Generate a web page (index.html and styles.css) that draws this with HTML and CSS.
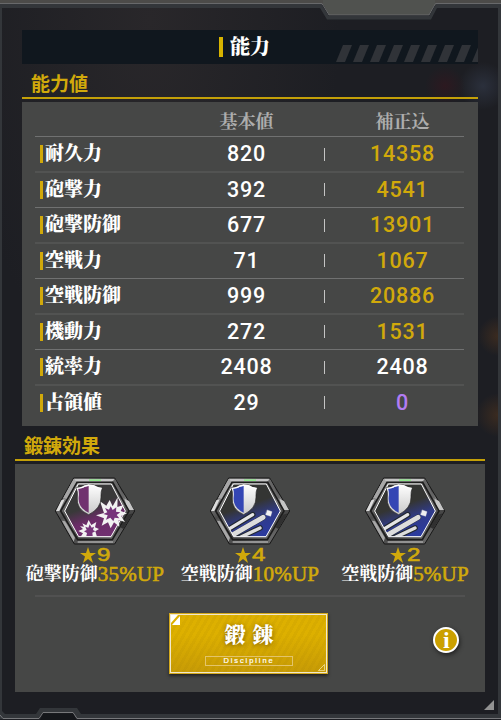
FILE: index.html
```
<!DOCTYPE html>
<html lang="ja">
<head>
<meta charset="utf-8">
<title>能力</title>
<link rel="stylesheet" href="styles.css">
</head>
<body>
<svg class="defs" aria-hidden="true">
  <defs>
    <linearGradient id="metal" x1="0" y1="0" x2="0.55" y2="1">
      <stop offset="0" stop-color="#999"/><stop offset=".15" stop-color="#a5a5a5"/><stop offset=".35" stop-color="#707070"/>
      <stop offset=".5" stop-color="#4c4c4c"/><stop offset=".62" stop-color="#7c7c7c"/><stop offset=".8" stop-color="#454545"/><stop offset="1" stop-color="#666"/>
    </linearGradient>
    <linearGradient id="purple" x1=".3" y1="0" x2=".7" y2="1">
      <stop offset=".4" stop-color="#393939"/><stop offset=".65" stop-color="#6b2c68"/><stop offset="1" stop-color="#713071"/>
    </linearGradient>
    <linearGradient id="blue" x1=".3" y1="0" x2=".7" y2="1">
      <stop offset=".4" stop-color="#343533"/><stop offset=".66" stop-color="#303b89"/><stop offset="1" stop-color="#2b3aa0"/>
    </linearGradient>
    <linearGradient id="silver" x1="0" y1="0" x2="0" y2="1">
      <stop offset="0" stop-color="#fff"/><stop offset="1" stop-color="#c9c9c9"/>
    </linearGradient>
    <clipPath id="inner"><path d="M190 57H289L331 138L288 215H191L149 138Z"/></clipPath>
    <symbol id="hex" viewBox="120 36 240 204">
      <path d="M176 39H299L359 138L299 237H178L121 138Z" fill="url(#metal)" stroke="#161616" stroke-width="3"/>
      <path d="M180 42H296L300 50H178Z" fill="#c4c4c4"/>
      <path d="M222 43H258V48H222Z" fill="#8fe48a"/>
      <path d="M176 42L186 51L157 103L145 98Z" fill="#a7a7a7"/>
      <path d="M123 138L139 106L149 103L133 138Z" fill="#ddd"/>
      <path d="M300 42L288 53L315 103L329 98Z" fill="#666"/>
      <path d="M329 102L342 108L357 135H337Z" fill="#c6c6c6"/>
      <path d="M186 52L137 138L188 224H292L342 138L293 52Z" fill="none" stroke="#1c1c1c" stroke-width="5"/>
      <path d="M141 167L150 169L180 218L176 230Z" fill="#a8a8a8"/>
      <path d="M338 149L354 145L325 192L316 187Z" fill="#303030"/>
      <path d="M188 231H294" stroke="#a5a5a5" stroke-width="5"/>
    </symbol>
    <symbol id="shield" viewBox="120 36 240 204">
      <path d="M183 68Q200 68 208 61L221 58L237 61Q247 68 262 69Q257 80 258 96Q259 130 221 149Q183 133 187 96Q189 80 183 68Z" fill="url(#silver)" stroke="#222" stroke-width="2"/>
      <path d="M189 70Q202 70 210 65L221 63V143Q188 127 191 96Q193 82 189 70Z" fill="currentColor"/>
      <path d="M185 70Q202 69 209 63L221 60L238 63Q247 69 260 70" fill="none" stroke="#fff" stroke-width="4"/>
    </symbol>
    <symbol id="badge-gun" viewBox="120 36 240 204">
      <use href="#hex" x="120" y="36" width="240" height="204"/>
      <path d="M190 57H289L331 138L288 215H191L149 138Z" fill="url(#purple)"/>
      <path d="M190 57H289L331 138L288 215H191L149 138Z" fill="none" stroke="#fff" stroke-width="3"/>
      <g>
        <path d="M255 109L274 122L284 105L293 124L308 97L307 126L326 120L317 138L336 145L318 153L330 171L311 165L313 185L297 172L287 190L279 172L260 182L267 160L243 151L267 144Z" fill="#f2f2f2"/>
        <path d="M270 129L282 134L287 124L293 135L304 127L303 140L316 142L305 150L313 160L299 158L295 169L286 158L273 164L278 151L265 147L277 142Z" fill="#76347a"/>
        <path d="M202 175L214 181L221 165L229 180L244 171L240 187L252 192L241 199L246 215H197L204 205L190 198L204 192L195 184L207 185Z" fill="#f2f2f2"/>
        <path d="M211 185L220 188L224 178L230 188L237 185L234 195L241 199L232 203L233 213H214L216 204L207 199L215 195Z" fill="#76347a"/>
      </g>
      <use href="#shield" x="120" y="36" width="240" height="204" color="#71326f"/>
    </symbol>
    <symbol id="badge-air" viewBox="120 36 240 204">
      <use href="#hex" x="120" y="36" width="240" height="204"/>
      <path d="M190 57H289L331 138L288 215H191L149 138Z" fill="url(#blue)"/>
      <g clip-path="url(#inner)" stroke-linecap="round">
        <path d="M170 196L248 149M180 215L279 157M205 220L270 189" stroke="#222831" stroke-width="17"/>
        <path d="M170 196L248 149" stroke="#e4e4e4" stroke-width="10"/>
        <path d="M184 212L279 157" stroke="#ddd" stroke-width="15"/>
        <path d="M205 220L270 189" stroke="#ddd" stroke-width="10"/>
        <path d="M292 135L306 140L302 154L287 149Z" fill="#f0f0f0" stroke="#f0f0f0" stroke-width="1"/>
      </g>
      <path d="M190 57H289L331 138L288 215H191L149 138Z" fill="none" stroke="#fff" stroke-width="3"/>
      <use href="#shield" x="120" y="36" width="240" height="204" color="#3446b4"/>
    </symbol>
  </defs>
</svg>

<svg class="frame" viewBox="0 0 501 720" aria-hidden="true">
  <path d="M0 0H501V5H0Z" fill="#4c4b49"/>
  <path d="M323 0H435V4L429 15H329L323 4Z" fill="#50524f"/>
  <path d="M0 3.5H322L329 15H429L435.500 3.500H501" fill="none" stroke="#68696b"/>
  <path d="M0 4H321.500L328.500 15.500H429.500L436 4H501V8H437L431 19.500H327L320 8H2V711L5 714H36L40 708H77L81 714H501V719H77L73 713H42L38 719H0Z" fill="#33363a"/>
  <path d="M498 8H501V716H498Z" fill="#33363a"/>
  <path d="M0 8H2V716H0Z" fill="#33363a"/>
  <path d="M0 715L3 718.500H39L43 712.500H73L77 718.500H501" fill="none" stroke="#77787b"/>
  <path d="M40 720L43.500 713.500H73L76.500 720Z" fill="#14161a"/>
  <path d="M484 710L494 700V710Z" fill="#929292"/>
</svg>

<main class="window">
  <header class="title">
    <h1>能力</h1>
    <svg class="stripes" viewBox="0 0 142 18">
      <path id="s" d="M0 17L7 0H16L9 17Z"/>
      <use href="#s" x="17"/><use href="#s" x="34"/><use href="#s" x="51"/><use href="#s" x="68"/><use href="#s" x="85"/><use href="#s" x="102"/><use href="#s" x="119"/><use href="#s" x="136"/>
    </svg>
  </header>

  <section class="stats">
    <h2>能力値</h2>
    <div class="panel">
      <div class="row head"><span></span><span>基本値</span><span></span><span>補正込</span></div>
      <div class="row"><b>耐久力</b><span>820</span><i></i><em>14358</em></div>
      <div class="row"><b>砲撃力</b><span>392</span><i></i><em>4541</em></div>
      <div class="row"><b>砲撃防御</b><span>677</span><i></i><em>13901</em></div>
      <div class="row"><b>空戦力</b><span>71</span><i></i><em>1067</em></div>
      <div class="row"><b>空戦防御</b><span>999</span><i></i><em>20886</em></div>
      <div class="row"><b>機動力</b><span>272</span><i></i><em>1531</em></div>
      <div class="row"><b>統率力</b><span>2408</span><i></i><span>2408</span></div>
      <div class="row"><b>占領値</b><span>29</span><i></i><em class="violet">0</em></div>
    </div>
  </section>

  <section class="training">
    <h2>鍛錬効果</h2>
    <div class="panel">
      <div class="effects">
        <article>
          <svg class="badge"><use href="#badge-gun"/></svg>
          <div class="stars"><svg viewBox="0 0 16 16"><path d="M8 0L10 6H16L11 9.600L13 16L8 12L3 16L5 9.600L0 6H6Z"/></svg><span>9</span></div>
          <p>砲撃防御<strong>35%UP</strong></p>
        </article>
        <article>
          <svg class="badge"><use href="#badge-air"/></svg>
          <div class="stars"><svg viewBox="0 0 16 16"><path d="M8 0L10 6H16L11 9.600L13 16L8 12L3 16L5 9.600L0 6H6Z"/></svg><span>4</span></div>
          <p>空戦防御<strong>10%UP</strong></p>
        </article>
        <article>
          <svg class="badge"><use href="#badge-air"/></svg>
          <div class="stars"><svg viewBox="0 0 16 16"><path d="M8 0L10 6H16L11 9.600L13 16L8 12L3 16L5 9.600L0 6H6Z"/></svg><span>2</span></div>
          <p>空戦防御<strong>5%UP</strong></p>
        </article>
      </div>
      <div class="actions">
        <button class="train">
          <svg class="corner top" viewBox="0 0 9 10"><path d="M0 0H7L0 8ZM9 1V10H1Z" fill="#fff"/></svg>
          <span class="main-label">鍛錬</span>
          <span class="sub-label">Discipline</span>
          <svg class="corner bottom" viewBox="0 0 8 8"><path d="M.5 7.500L7.500 .5V7.500Z" fill="none" stroke="#f0dc92"/></svg>
        </button>
        <button class="info">i</button>
      </div>
    </div>
  </section>
</main>
</body>
</html>
```
FILE: styles.css
```
* { box-sizing: border-box; margin: 0; padding: 0; }
:root {
  --gold: #d1a90b;
  --sans: "Liberation Sans", "Noto Sans CJK JP", sans-serif;
  --mincho: "Liberation Serif", "Noto Serif CJK JP", "Noto Sans CJK JP", serif;
}
body {
  position: relative;
  width: 501px;
  height: 720px;
  overflow: hidden;
  color: #fff;
  font-family: var(--sans);
  background:
    radial-gradient(circle at 445px 86px, #2c1920 0, transparent 20px),
    radial-gradient(circle at 483px 86px, #2b303c 0, transparent 24px),
    radial-gradient(circle at 498px 336px, #3b2b20 0, transparent 20px),
    radial-gradient(circle at 498px 415px, #3b2b20 0, transparent 22px),
    radial-gradient(ellipse at 150px 20px, #29272a 0, transparent 190px),
    #1d1e23;
}
.defs { position: absolute; width: 0; height: 0; }
.frame { position: absolute; inset: 0; width: 501px; height: 720px; }
.window { position: relative; padding: 30px 16px 0 15px; }

.title {
  display: grid;
  grid-template-columns: 1fr auto 1fr;
  align-items: center;
  height: 34px;
  margin: 0 7px;
  background: #10171e;
}
.title h1 {
  grid-column: 2;
  display: flex;
  align-items: center;
  gap: 7px;
  margin-right: 11px;
  font: 900 20px/34px var(--mincho);
}
.title h1::before { content: ""; width: 4px; height: 20px; background: #d7b300; }
.stripes { justify-self: end; align-self: end; width: 142px; height: 18px; margin-bottom: 1px; fill: #303338; }

h2 { font: 700 19px/33px "Noto Sans CJK JP", sans-serif; color: var(--gold); border-bottom: 2px solid #c4a008; }
.panel { background: #464746; }
.stats { margin: 0 7px; }
.stats h2 { height: 35px; padding: 2px 0 0 9px; }
.stats .panel { height: 324px; margin-top: 3px; padding: 0 14px 0 13px; }
.row {
  display: grid;
  grid-template-columns: 150px 123px 33px 123px;
  align-items: center;
  height: 35px;
  border-top: 1px solid #707171;
}
.row:nth-child(odd) { height: 36px; border-top: 2px solid #525352; padding-bottom: 1px; }
.row > span, .row > em { text-align: center; font: 500 21.5px/32px Roboto, sans-serif; letter-spacing: .8px; }
.row em { color: var(--gold); }
.row em.violet { color: #b27cf4; }
.row b { display: flex; align-items: center; gap: 2px; padding-left: 5px; font: 900 19px/32px var(--mincho); white-space: nowrap; }
.row b::before { content: ""; width: 3px; height: 18px; background: var(--gold); }
.row i { justify-self: center; width: 1px; height: 13px; background: #c4c4c4; }
.row.head { height: 34px; border: 0; padding: 6px 0 0; }
.row.head span { font: 700 18px/28px var(--mincho); letter-spacing: 0; color: #adadad; }

.training { margin-top: 1px; }
.training h2 { height: 34px; padding: 2px 0 0 9px; line-height: 32px; }
.training .panel { height: 228px; margin-top: 3px; padding: 13px 0 0; }
.effects { display: grid; grid-template-columns: repeat(3, 155px); margin-left: 2.5px; }
.effects article { display: flex; flex-direction: column; align-items: center; }
.badge { display: block; width: 80px; height: 68px; }
.stars { display: flex; align-items: center; gap: 1px; height: 20px; color: var(--gold); font: 400 19px/18px var(--sans); -webkit-text-stroke: .6px; }
.stars svg { width: 16px; height: 16px; fill: currentColor; }
.stars span { display: inline-block; width: 13px; transform: scaleX(1.27); transform-origin: left; }
.effects p { display: flex; height: 20px; font: 700 18px/18px var(--mincho); white-space: nowrap; }
.effects strong { color: var(--gold); font: 400 21px/18px "Liberation Serif", serif; letter-spacing: .2px; -webkit-text-stroke: .6px; }

.actions {
  display: grid;
  grid-template-columns: 1fr 159px 1fr;
  align-items: start;
  margin: 10px 20px 0;
  padding-top: 16px;
  border-top: 2px solid #515151;
}
.train {
  position: relative;
  grid-column: 2;
  display: flex;
  flex-direction: column;
  align-items: center;
  width: 159px;
  height: 61px;
  margin-left: -2px;
  border: 1px solid #d3a91e;
  color: #fff;
  background:
    repeating-linear-gradient(120deg, #0000 0 3px, #9b790018 3px 6px),
    linear-gradient(#ddb000 35%, #c79b06);
  box-shadow: inset 0 0 0 1px #f1e8cd, 0 2px 3px #222;
}
.main-label { height: 42px; padding-left: 9px; font: 900 21px/43px var(--mincho); letter-spacing: 7px; text-shadow: 0 1px 5px #775900; }
.sub-label { width: 88px; height: 10px; margin-left: 2px; border: 1px solid #e3c46a; font: 400 7.5px/8px var(--sans); letter-spacing: 1.9px; text-align: center; -webkit-text-stroke: .2px; }
.corner { position: absolute; }
.corner.top { left: 1px; top: 1px; width: 9px; height: 10px; }
.corner.bottom { right: 2px; bottom: 2px; width: 7px; height: 7px; }
.info {
  grid-column: 3;
  justify-self: center;
  width: 26px;
  height: 26px;
  margin: 14px 0 0 98px;
  border: 2px solid #fff;
  border-radius: 50%;
  color: #fff;
  background: #cba000;
  font: 700 24px/20px "Liberation Serif", serif;
  box-shadow: 1px 2px 4px #222;
}
```
